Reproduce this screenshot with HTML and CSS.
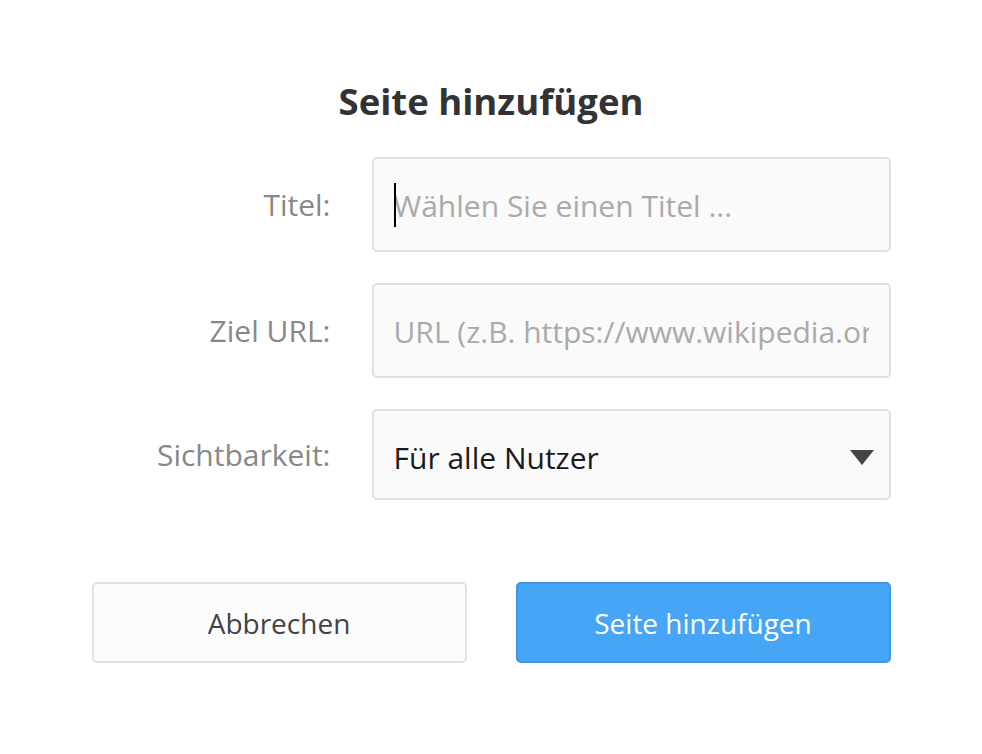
FILE: index.html
```html
<!DOCTYPE html>
<html lang="de">
<head>
<meta charset="utf-8">
<title>Seite hinzufügen</title>
<link rel="stylesheet" href="styles.css">
</head>
<body>
<div class="dialog">
  <h1 class="dialog-title">Seite hinzufügen</h1>
  <form class="form">
    <label class="form-label" for="title">Titel:</label>
    <div class="field">
      <input class="input" id="title" type="text" placeholder="Wählen Sie einen Titel ...">
      <span class="caret"></span>
    </div>
    <label class="form-label" for="url">Ziel URL:</label>
    <div class="field">
      <input class="input" id="url" type="text" placeholder="URL (z.B. https://www.wikipedia.org)">
    </div>
    <label class="form-label" for="vis">Sichtbarkeit:</label>
    <div class="field">
      <select class="select" id="vis">
        <option>Für alle Nutzer</option>
      </select>
      <svg class="select-arrow" width="24" height="15" viewBox="0 0 24 15"><polygon points="0,0 24,0 12,15" fill="#444"/></svg>
    </div>
  </form>
  <div class="actions">
    <button class="btn btn-secondary" type="button">Abbrechen</button>
    <button class="btn btn-primary" type="button">Seite hinzufügen</button>
  </div>
</div>
</body>
</html>
```

FILE: styles.css
```css
html, body {
  margin: 0;
  padding: 0;
  background: #ffffff;
}

body {
  font-family: "Open Sans", "Liberation Sans", sans-serif;
}

.dialog {
  width: 799px;
  margin: 0 auto;
  padding-top: 81px;
}

.dialog-title {
  margin: 0;
  height: 40px;
  line-height: 40px;
  font-size: 36.5px;
  font-weight: 700;
  color: #333333;
  text-align: center;
}

.form {
  margin-top: 36px;
  display: grid;
  grid-template-columns: 239px 519px;
  column-gap: 41px;
  row-gap: 31px;
  align-items: center;
}

.form-label {
  text-align: right;
  font-size: 30px;
  color: #888888;
}

.field {
  position: relative;
}

.input,
.select {
  box-sizing: border-box;
  width: 100%;
  height: 95px;
  margin: 0;
  padding: 2px 20px 0 20px;
  border: 2px solid #e0e0e0;
  border-radius: 5px;
  background: #fafafa;
  font-family: "Open Sans", "Liberation Sans", sans-serif;
  font-size: 30px;
  color: #222222;
  outline: none;
}

.input::placeholder {
  color: #aaaaaa;
  opacity: 1;
}

.select {
  height: 91px;
  padding-top: 5px;
  appearance: none;
  -webkit-appearance: none;
  color: #1a1a1a;
}

.caret {
  position: absolute;
  left: 22px;
  top: 26px;
  width: 2px;
  height: 44px;
  background: #000000;
}

.select-arrow {
  position: absolute;
  right: 17px;
  top: 41px;
}

.actions {
  margin-top: 82px;
  display: flex;
  gap: 49px;
}

.btn {
  box-sizing: border-box;
  width: 375px;
  height: 81px;
  border-radius: 5px;
  font-family: "Open Sans", "Liberation Sans", sans-serif;
  font-size: 28px;
  cursor: pointer;
}

.btn-secondary {
  background: #fcfcfc;
  border: 2px solid #e2e2e2;
  color: #444444;
}

.btn-primary {
  background: #46a5f5;
  border: 2px solid #3f95e0;
  color: #ffffff;
}
```
